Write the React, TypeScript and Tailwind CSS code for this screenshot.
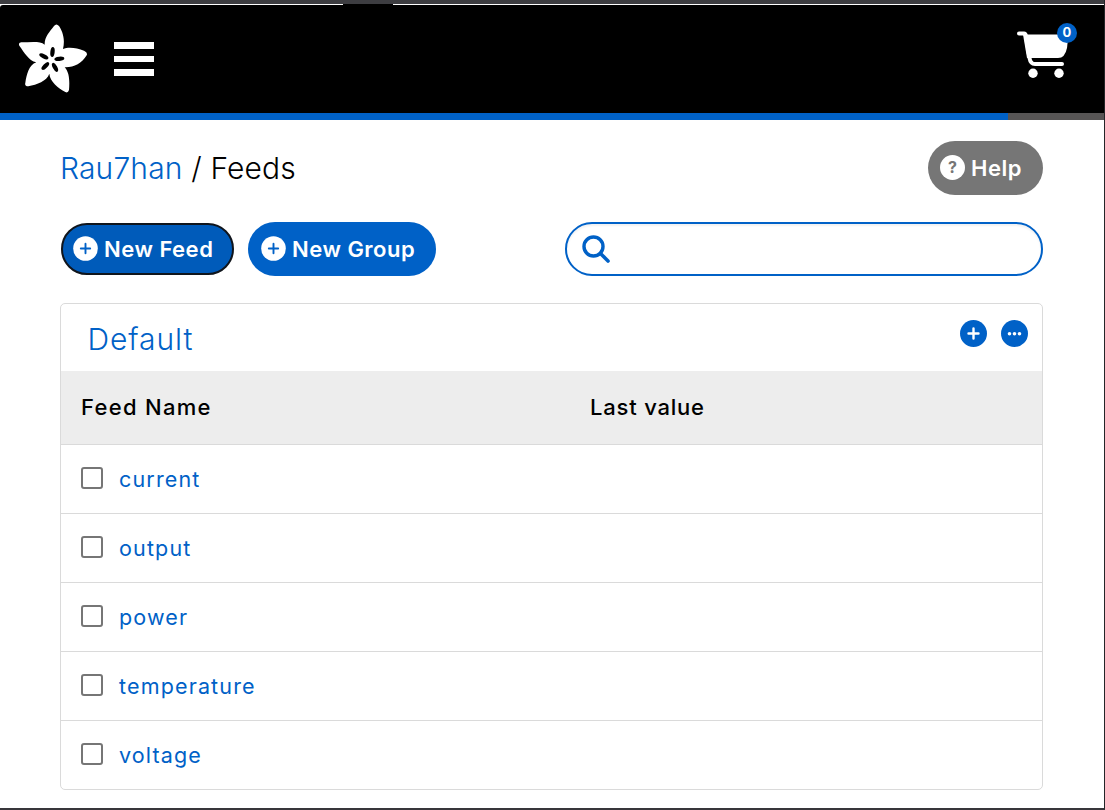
const feeds = ['current', 'output', 'power', 'temperature', 'voltage']

function Flower() {
  return (
    <svg className="h-[69px] w-[68px]" viewBox="57 73 204 207" aria-hidden="true">
      <path
        fill="#fff"
        d="M134 135C133 113 148 97 162 79Q169 70 177 79C185 92 197 114 189 148C206 141 231 145 252 153Q264 158 260 167C245 191 222 204 194 203C209 219 209 246 207 271Q204 281 196 277C175 265 150 246 148 222C140 245 111 254 85 260Q73 260 76 249C80 226 86 196 109 188C85 182 73 158 58 138Q54 129 64 128C91 128 120 123 134 135Z"
      />
      <g fill="#000">
        <ellipse cx="157.500" cy="157" rx="6.500" ry="15" transform="rotate(6 157.500 157)" />
        <ellipse cx="131.500" cy="170" rx="15" ry="6.500" transform="rotate(27 131.500 170)" />
        <ellipse cx="178" cy="177.500" rx="15" ry="6.500" transform="rotate(-6 178 177.500)" />
        <ellipse cx="136" cy="199" rx="15" ry="6.500" transform="rotate(-46 136 199)" />
        <ellipse cx="165" cy="203" rx="15" ry="6.500" transform="rotate(62 165 203)" />
      </g>
    </svg>
  )
}

function Cart() {
  return (
    <svg className="h-[48px] w-[52px]" viewBox="0 0 52 48" aria-hidden="true">
      <path fill="#fff" d="M6 4.500H51.500L50 18Q48 28 41 28H10Z" />
      <path
        fill="none"
        stroke="#fff"
        strokeWidth="4"
        strokeLinecap="round"
        strokeLinejoin="round"
        d="M2 3.500H7Q8.500 3.500 9 6L12.500 28Q13.500 34 18 34H45"
      />
      <path fill="#000" d="M15.500 28.300H45V32H18Q15.500 32 15.500 28.300Z" />
      <circle cx="16" cy="43.300" r="4.700" fill="#fff" />
      <circle cx="42" cy="43.300" r="4.700" fill="#fff" />
    </svg>
  )
}

function PlusCircle() {
  return (
    <svg className="mb-[2px] size-[25px] shrink-0" viewBox="0 0 25 25" aria-hidden="true">
      <circle cx="12.500" cy="12.500" r="12.300" fill="#fff" />
      <path d="M12.500 7.800v9.400M7.800 12.500h9.400" stroke="#0061c7" strokeWidth="1.900" strokeLinecap="round" />
    </svg>
  )
}

function Header() {
  return (
    <header className="flex h-[108px] shrink-0 items-start justify-between rounded-tl-[3px] bg-black pl-[19px] pr-[27px]">
      <div className="flex items-start">
        <a href="#" aria-label="Home" className="mt-[19px]">
          <Flower />
        </a>
        <button aria-label="Menu" className="ml-[27px] mt-[37px] flex w-10 flex-col gap-[7px]">
          <span className="h-[7px] w-full bg-white" />
          <span className="h-[6px] w-full bg-white" />
          <span className="h-[7px] w-full bg-white" />
        </button>
      </div>
      <a href="#" aria-label="Cart" className="relative mt-[25px] w-[60px]">
        <Cart />
        <span className="absolute right-0 -top-[7px] flex size-5 items-center justify-center rounded-full bg-[#0061c7] pb-px text-[13px] font-bold leading-none text-white">
          0
        </span>
      </a>
    </header>
  )
}

function Toolbar() {
  return (
    <div className="mt-[27px] flex h-[54px] items-center justify-between">
      <div className="flex h-full items-center gap-[14px] pl-px text-[22px] font-semibold text-white">
        <button className="flex h-[52px] w-[173px] items-center whitespace-nowrap rounded-full border-[2px] border-[#10151c] bg-[#005bba] pl-[10px]">
          <PlusCircle />
          <span className="ml-[6px] tracking-[0.500px]">New Feed</span>
        </button>
        <button className="flex h-[54px] w-[188px] items-center whitespace-nowrap rounded-full bg-[#0061c7] pl-[13px]">
          <PlusCircle />
          <span className="ml-[6px] tracking-[0.500px]">New Group</span>
        </button>
      </div>
      <label className="flex h-[54px] w-[478px] items-center rounded-full border-2 border-[#0061c7] pl-[15px] shadow-[inset_0_2px_2px_#f2f2f2]">
        <svg className="size-7 shrink-0" viewBox="0 0 28 28" fill="none" stroke="#0061c7" aria-hidden="true">
          <circle cx="11.500" cy="11.500" r="9.500" strokeWidth="3.400" />
          <path d="M18.500 18.500L26 26" strokeWidth="3.600" strokeLinecap="round" />
        </svg>
        <input aria-label="Search" className="ml-3 w-full bg-transparent outline-none" />
      </label>
    </div>
  )
}

function FeedTable() {
  return (
    <section className="mt-[27px] h-[487px] overflow-hidden rounded-[5px] border border-[#dadada]">
      <div className="flex h-[67px] items-start justify-between pl-[26.500px] pr-[14px]">
        <h2 className="mt-[15px] text-[30px] font-[350] leading-10 tracking-[0.900px] text-[#0061c7]">Default</h2>
        <div className="mt-4 flex gap-[14px]">
          <button aria-label="Add feed">
            <svg className="size-[27px]" viewBox="0 0 27 27">
              <circle cx="13.500" cy="13.500" r="13.500" fill="#0061c7" />
              <path d="M13.500 8.500v10M8.500 13.500h10" stroke="#fff" strokeWidth="2.400" strokeLinecap="round" />
            </svg>
          </button>
          <button aria-label="More actions">
            <svg className="size-[27px]" viewBox="0 0 27 27">
              <circle cx="13.500" cy="13.500" r="13.500" fill="#0061c7" />
              <g fill="#fff">
                <circle cx="8.500" cy="13.700" r="1.800" />
                <circle cx="13.500" cy="13.700" r="1.800" />
                <circle cx="18.500" cy="13.700" r="1.800" />
              </g>
            </svg>
          </button>
        </div>
      </div>
      <div className="flex h-[73px] items-center bg-[#ededed] pl-5 text-[22px] font-medium text-black">
        <span className="w-[509px] tracking-[1.300px]">Feed Name</span>
        <span className="tracking-[0.800px]">Last value</span>
      </div>
      {feeds.map((feed) => (
        <div key={feed} className="flex h-[69px] items-center border-t border-[#dadada] pl-5">
          <input
            type="checkbox"
            aria-label={feed}
            className="mb-[2px] size-[22px] appearance-none rounded-[3px] border-2 border-[#767676] bg-white"
          />
          <a href="#" className="ml-4 text-[21.500px] font-[370] tracking-[1.150px] text-[#0061c7]">
            {feed}
          </a>
        </div>
      ))}
    </section>
  )
}

export default function App() {
  return (
    <div className="flex h-[810px] w-[1105px] flex-col overflow-hidden border-b-2 border-r border-b-[#38363b] border-r-[#242528] bg-white font-[Inter,sans-serif]">
      <div className="h-1 shrink-0 bg-[#3d3d41]" />
      <div className="flex h-px shrink-0 bg-white pl-[343px]">
        <span className="w-[50px] bg-black" />
      </div>
      <Header />
      <div className="h-[7px] shrink-0 bg-[#575555]">
        <div className="h-full w-[1008px] bg-[#0061c7]" />
      </div>
      <main className="pl-[60px] pr-[61px] pt-[21px]">
        <div className="flex h-[54px] items-center justify-between">
          <h1 className="whitespace-nowrap text-[30px] font-[350] tracking-[0.150px] text-black">
            <a href="#" className="text-[#0061c7]">Rau7han</a> / Feeds
          </h1>
          <button className="flex h-[54px] w-[115px] items-center rounded-full bg-[#767676] pl-[12px] text-[22px] font-semibold text-white">
            <span className="mb-[2px] flex size-[25px] items-center justify-center rounded-full bg-white text-[16px] font-bold leading-none text-[#767676]">
              ?
            </span>
            <span className="ml-[6px] pt-px tracking-[0.500px]">Help</span>
          </button>
        </div>
        <Toolbar />
        <FeedTable />
      </main>
    </div>
  )
}
